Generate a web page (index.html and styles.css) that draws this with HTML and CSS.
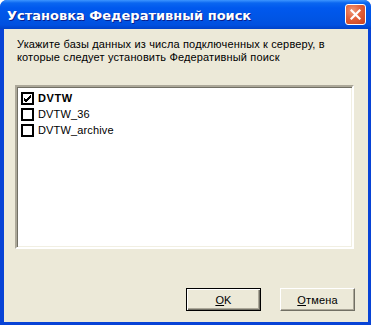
FILE: index.html
```html
<!DOCTYPE html>
<html lang="ru">
<head>
    <meta charset="UTF-8">
    <title>Установка Федеративный поиск</title>
    <link rel="stylesheet" href="styles.css">
</head>
<body>
<div class="window">
    <div class="titlebar">
        <span class="title">Установка Федеративный поиск</span>
        <span class="close">
            <svg width="11" height="11" viewBox="0 0 11 11">
                <path d="M1.5 1.5 L9.5 9.5 M9.5 1.5 L1.5 9.5" stroke="#fff" stroke-width="2.2" stroke-linecap="square"/>
            </svg>
        </span>
    </div>
    <div class="client">
        <p class="prompt">Укажите базы данных из числа подключенных к серверу, в<br>которые следует установить Федеративный поиск</p>
        <div class="list">
            <div class="item">
                <span class="check">
                    <svg width="9" height="9" viewBox="0 0 9 9">
                        <path d="M1 4 L3 6 L8 1 M1 5 L3 7 L8 2 M1 6 L3 8 L8 3" stroke="#000" stroke-width="1" fill="none"/>
                    </svg>
                </span>
                <b>DVTW</b>
            </div>
            <div class="item"><span class="check"></span>DVTW_36</div>
            <div class="item"><span class="check"></span>DVTW_archive</div>
        </div>
        <div class="buttons">
            <button class="btn default"><u>O</u>K</button>
            <button class="btn"><u>О</u>тмена</button>
        </div>
    </div>
</div>
</body>
</html>
```

FILE: styles.css
```css
* {
    padding: 0;
    margin: 0;
    box-sizing: border-box;
}
html,body {
    width: 371px;
    height: 325px;
    background: #fff;
    overflow: hidden;
}
.window {
    width: 371px;
    height: 325px;
    display: flex;
    flex-direction: column;
    border-radius: 7px 7px 0 0;
    overflow: hidden;
    background: #0843d6;
}
.titlebar {
    height: 29px;
    flex: none;
    display: flex;
    align-items: center;
    justify-content: space-between;
    padding: 0 5px 0 7px;
    background: linear-gradient(to bottom, #3d95ff 0px, #0a66f0 3px, #0058ee 8px, #0055e5 18px, #0050e0 25px, #0042c8 29px);
}
.title {
    color: #fff;
    font: bold 13px "DejaVu Sans", sans-serif;
    text-shadow: 1px 1px 0 #0a1e8c;
    padding-top: 1px;
}
.close {
    width: 21px;
    height: 21px;
    border: 1px solid #fff;
    border-radius: 3px;
    background: radial-gradient(circle at 35% 30%, #ef9a7a 0%, #e2603a 45%, #c8401c 100%);
    display: flex;
    align-items: center;
    justify-content: center;
}
.client {
    flex: 1;
    margin: 0 3px 3px 4px;
    background: #ece9d8;
    display: flex;
    flex-direction: column;
    font: 11px "Liberation Sans", Arial, sans-serif;
    letter-spacing: 0.15px;
    color: #000;
}
.prompt {
    padding: 9px 0 0 13px;
    line-height: 13px;
}
.list {
    margin: 21px 0 0 11px;
    width: 339px;
    height: 164px;
    background: #fff;
    border: 2px solid;
    border-color: #aca899 #fff #fff #aca899;
    box-shadow: inset 1px 1px 0 #716f64, inset -1px -1px 0 #f1efe2;
    padding: 5px 0 0 4px;
}
.item {
    height: 16px;
    display: flex;
    align-items: flex-start;
    gap: 4px;
    line-height: 13px;
}
.item b {
    font-weight: bold;
    letter-spacing: 0.6px;
}
.check {
    width: 13px;
    height: 13px;
    border: 2px solid #000;
    background: #fff;
    display: flex;
    align-items: center;
    justify-content: center;
}
.buttons {
    margin-top: 39px;
    display: flex;
    justify-content: flex-end;
    gap: 19px;
    padding-right: 13px;
}
.btn {
    width: 75px;
    height: 23px;
    background: #ece9d8;
    font: 11px "Liberation Sans", Arial, sans-serif;
    letter-spacing: 0.15px;
    color: #000;
    border: 1px solid;
    border-color: #fff #716f64 #716f64 #fff;
    box-shadow: inset -1px -1px 0 #aca899;
}
.btn.default {
    border: 1px solid #000;
    box-shadow: inset 1px 1px 0 #fff, inset -1px -1px 0 #716f64, inset -2px -2px 0 #aca899;
}
```
